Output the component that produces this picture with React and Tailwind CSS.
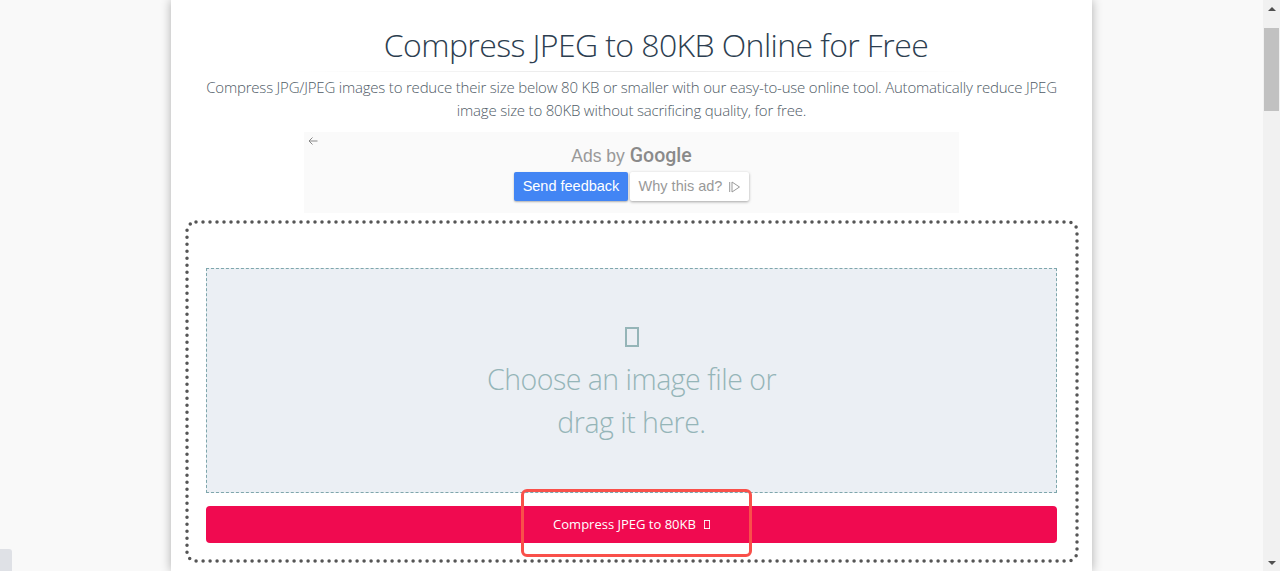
import React from 'react';

const Tofu = ({ className }) => (
    <svg className={className} viewBox="0 0 14 20" fill="none" preserveAspectRatio="none">
        <rect x="1" y="1" width="12" height="18" stroke="currentColor" strokeWidth="2" />
    </svg>
);

const AdBox = () => (
    <div className="relative mx-auto mt-[10px] w-[655px] h-[81px] bg-[#fafafa] flex flex-col items-center font-['Liberation_Sans',sans-serif]">
        <svg className="absolute left-[4px] top-[4px] w-[10px] h-[10px] text-[#888]" viewBox="0 0 10 10" fill="none">
            <path d="M9.5 5H1M4.5 1.5 1 5l3.5 3.5" stroke="currentColor" strokeWidth="1" />
        </svg>
        <div className="mt-[9px] h-[27px] flex items-baseline gap-[5px] text-[#999]">
            <span className="text-[17.5px]">Ads by</span>
            <span className="text-[19.5px] font-medium font-['Roboto',sans-serif] text-[#8a8a8a]">Google</span>
        </div>
        <div className="mt-[4px] flex gap-[2px]">
            <div className="w-[114px] h-[29px] bg-[#4285f4] text-white text-[14.5px] rounded-[2px] shadow-[0_1px_2px_rgba(0,0,0,0.3)] flex items-center justify-center">
                Send feedback
            </div>
            <div className="w-[119px] h-[29px] bg-white text-[#999] text-[14.5px] rounded-[2px] shadow-[0_1px_3px_rgba(0,0,0,0.35)] flex items-center justify-center gap-[7px]">
                Why this ad?
                <svg className="w-[11px] h-[12px]" viewBox="0 0 11 12" fill="none">
                    <path d="M.7 1v10M3 1v10l7.5-5z" stroke="currentColor" strokeWidth="1" />
                </svg>
            </div>
        </div>
    </div>
);

const Scrollbar = () => (
    <div className="w-[17px] shrink-0 bg-[#f1f1f1] flex flex-col items-center">
        <div className="h-[17px] flex items-center justify-center">
            <div className="w-0 h-0 border-x-[4px] border-x-transparent border-b-[4px] border-b-[#505050]" />
        </div>
        <div className="mt-[11px] w-[15px] h-[83px] bg-[#c1c1c1]" />
        <div className="mt-auto h-[17px] flex items-center justify-center">
            <div className="w-0 h-0 border-x-[4px] border-x-transparent border-t-[4px] border-t-[#505050]" />
        </div>
    </div>
);

export default function App() {
    return (
        <div className="relative h-[571px] overflow-hidden flex bg-[#f9f9f9] font-['Open_Sans',sans-serif]">
            <div className="flex-1 min-w-0">
                <main className="ml-[171px] w-[921px] h-[571px] bg-white shadow-[0_0_10px_rgba(0,0,0,0.3)] overflow-hidden">
                    <h1 className="pt-[24px] pl-[49px] h-[71px] text-center text-[32px] tracking-[-0.6px] leading-[42px] font-light text-[#2c3e50]">
                        Compress JPEG to 80KB Online for Free
                    </h1>
                    <div className="mx-[120px] h-px bg-gradient-to-r from-transparent via-[#e6e6e6] to-transparent" />
                    <p className="mt-[4px] px-[30px] text-center text-[15px] tracking-[-0.2px] leading-[23px] font-light text-[#4f5b66]">
                        Compress JPG/JPEG images to reduce their size below 80 KB or smaller with our easy-to-use online tool. Automatically reduce JPEG image size to 80KB without sacrificing quality, for free.
                    </p>
                    <AdBox />
                    <section className="relative mt-[7px] ml-[14px] w-[894px] h-[343px] pt-[48px] pl-[21px] pr-[22px]">
                        <svg className="absolute left-0 top-0 w-[894px] h-[343px] text-[#555]" viewBox="0 0 894 343" fill="none">
                            <rect x="2" y="2" width="890" height="339" rx="9" stroke="currentColor" strokeWidth="3.5" strokeLinecap="round" strokeDasharray="0 7" />
                        </svg>
                        <div className="h-[225px] border border-dashed border-[#7ea6ac] bg-[#ebeff4] flex flex-col items-center text-[#95b5b8]">
                            <Tofu className="mt-[58px] w-[14px] h-[20px]" />
                            <p className="mt-[11px] text-center text-[28.5px] tracking-[-0.5px] leading-[43px] font-light">
                                Choose an image file or
                                <br />
                                drag it here.
                            </p>
                        </div>
                        <button className="mt-[13px] w-full h-[37px] rounded-[4px] bg-[#f00a50] text-white text-[13px] flex items-center justify-center gap-[8px]">
                            Compress JPEG to 80KB
                            <Tofu className="w-[6px] h-[9px]" />
                        </button>
                    </section>
                </main>
            </div>
            <Scrollbar />
            <div className="absolute left-0 top-[549px] w-[12px] h-[22px] bg-[#dfe1e6] rounded-tr-[3px]" />
            <div className="absolute left-[521px] top-[489px] w-[231px] h-[68px] border-[3px] border-[#f9504a] rounded-[6px]" />
        </div>
    );
}
